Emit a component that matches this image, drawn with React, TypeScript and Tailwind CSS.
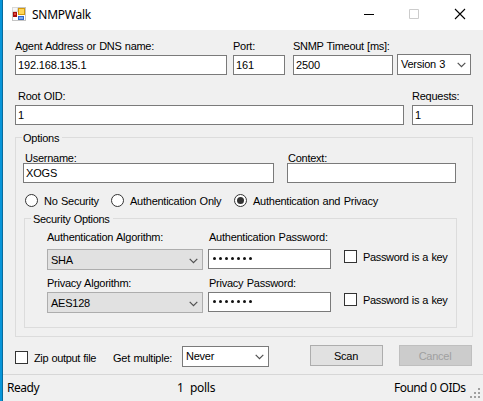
import { ReactNode } from 'react';
import clsx from 'clsx';

function Text({ children, className }: { children: ReactNode; className?: string }) {
  return <span className={clsx('block h-[14px] whitespace-pre leading-[14px]', className)}>{children}</span>;
}

function Field({ value, className }: { value?: string; className: string }) {
  return (
    <div className={clsx('flex h-5 shrink-0 border border-[#7a7a7a] bg-white pl-[2px] pt-[2px]', className)}>
      <Text className="tracking-[-0.15px]">{value}</Text>
    </div>
  );
}

function Password() {
  return (
    <div className="flex h-5 w-[123px] items-center gap-[3px] border border-[#7a7a7a] bg-white pb-px pl-[3.5px]">
      {[0, 1, 2, 3, 4, 5, 6].map((i) => (
        <span key={i} className="size-[3px] rounded-full bg-[#111]" />
      ))}
    </div>
  );
}

function Combo({ value, className }: { value: string; className: string }) {
  return (
    <div className={clsx('flex h-[21px] shrink-0 items-start justify-between border pl-[3px] pr-1', className)}>
      <Text className="pt-[2px]">{value}</Text>
      <svg width="9" height="6" viewBox="0 0 9 6" className="mt-[7px]">
        <path d="M0.7 0.8 4.5 4.6 8.3 0.8" fill="none" stroke="#505050" strokeWidth="1.2" />
      </svg>
    </div>
  );
}

function Radio({ label, checked, className }: { label: string; checked?: boolean; className: string }) {
  return (
    <div className={clsx('flex shrink-0 items-start gap-[6px]', className)}>
      <span className="flex size-[13px] shrink-0 items-center justify-center rounded-full border border-[#333] bg-white">
        {checked && <span className="size-[7px] rounded-full bg-[#333]" />}
      </span>
      <Text>{label}</Text>
    </div>
  );
}

function Check({ label, className }: { label: string; className?: string }) {
  return (
    <div className={clsx('flex h-[14px] shrink-0 gap-[6px] tracking-[-0.35px]', className)}>
      <span className="size-[13px] shrink-0 border border-[#333] bg-white" />
      <Text>{label}</Text>
    </div>
  );
}

const select = 'w-[156px] border-[#adadad] bg-[#e1e1e1] pt-px';

export default function App() {
  return (
    <div className="flex h-[401px] w-[483px] overflow-hidden bg-[#f0f0f0] font-['Liberation_Sans',Arial,sans-serif] text-[11px] tracking-[-0.25px] [word-spacing:0.6px] text-black">
      <div className="w-[3px] shrink-0 border-r border-[#086b9c] bg-[#0795d9]" />
      <div className="flex w-[480px] flex-col">
        <header className="flex h-[30px] shrink-0 items-center bg-white pb-[2px] pl-[9px] pr-[17px]">
          <svg width="14" height="14" viewBox="0 0 14 14" shapeRendering="crispEdges">
            <path d="M0.5 0.5h13v13h-13z" fill="#fff" stroke="#c5c5c5" />
            <path d="M0 0h6v5H0z" fill="#d9d9d9" />
            <path d="M1 1h4v3H1z" fill="#f6f6f6" />
            <path d="M1 5h4v5H1z" fill="#a80f0d" />
            <path d="M2 6h2v2H2z" fill="#df4942" />
            <path d="M6 1h7v7H6z" fill="#d39a10" />
            <path d="M7 2h5v5H7z" fill="#ffd75a" />
            <path d="M6 9h6v4H6z" fill="#2f68cc" />
            <path d="M7 10h4v2H7z" fill="#7caaf1" />
          </svg>
          <span className="ml-[6px] mt-[2px] font-['Noto_Sans','Open_Sans',sans-serif] text-[12px] leading-4 tracking-[-0.25px]">SNMPWalk</span>
          <div className="ml-auto flex items-center">
            <svg width="102" height="12" viewBox="0 0 102 12">
              <path d="M0 6.5h10" stroke="#000" />
              <path d="M45.5 1.5h9v9h-9z" fill="none" stroke="#ccc" />
              <path d="m91 1 10 10m0-10L91 11" stroke="#000" strokeWidth="1.1" />
            </svg>
          </div>
        </header>

        <main className="h-[344px] shrink-0 pl-3 pt-[9px]">
          <div className="flex">
            <div className="mr-[6px] w-[212px]"><Text className="mb-[2px] tracking-[-0.3px]">Agent Address or DNS name:</Text><Field value="192.168.135.1" className="w-[212px]" /></div>
            <div className="mr-2 w-[52px]"><Text className="mb-[2px]">Port:</Text><Field value="161" className="w-[52px]" /></div>
            <div className="mr-1 w-[100px]"><Text className="mb-[2px] tracking-[-0.3px]">SNMP Timeout [ms]:</Text><Field value="2500" className="w-[100px]" /></div>
            <Combo value="Version 3" className="mt-[15px] w-[74px] border-[#7a7a7a] bg-white" />
          </div>
          <div className="mt-[14px] flex gap-2">
            <div><Text className="mb-[2px] pl-[3px]">Root OID:</Text><Field value="1" className="w-[389px]" /></div>
            <div><Text className="mb-[2px]">Requests:</Text><Field value="1" className="w-[61px]" /></div>
          </div>

          <section className="mt-3 h-[200px] w-[458px] border border-[#dcdcdc] pl-[7px]">
            <Text className="-ml-px -mt-[7px] w-[40px] bg-[#f0f0f0] pl-px">Options</Text>
            <div className="mt-[6px] flex gap-[13px]">
              <div><Text className="-mb-[2px] pl-[2px]">Username:</Text><Field value="XOGS" className="w-[251px]" /></div>
              <div><Text className="-mb-[2px] pl-px">Context:</Text><Field className="w-[169px]" /></div>
            </div>
            <div className="mt-[11px] flex h-[14px] pl-[2px]">
              <Radio label="No Security" className="w-[86px]" />
              <Radio label="Authentication Only" className="w-[123px]" />
              <Radio label="Authentication and Privacy" checked className="w-[160px]" />
            </div>

            <section className="ml-px mt-[10px] h-[110px] w-[433px] border border-[#dcdcdc]">
              <Text className="-mt-[7px] ml-[6px] w-[82px] bg-[#f0f0f0] pl-[2px] tracking-[-0.3px]">Security Options</Text>
              <div className="flex pl-[22px] pt-[4px]">
                <div className="w-[161px]"><Text className="mb-[5px]">Authentication Algorithm:</Text><Combo value="SHA" className={select} /></div>
                <div className="w-[136px]"><Text className="mb-[5px] pl-px">Authentication Password:</Text><Password /></div>
                <Check label="Password is a key" className="mt-5" />
              </div>
              <div className="flex pl-[22px] pt-[6px]">
                <div className="w-[161px]"><Text className="mb-[2px]">Privacy Algorithm:</Text><Combo value="AES128" className={select} /></div>
                <div className="w-[136px]"><Text className="mb-[2px] pl-px">Privacy Password:</Text><Password /></div>
                <Check label="Password is a key" className="mt-[17px]" />
              </div>
            </section>
          </section>

          <div className="mt-2 flex h-[22px]">
            <Check label="Zip output file" className="mt-[6px] w-[98px]" />
            <Text className="mt-[6px] w-[69px]">Get multiple:</Text>
            <Combo value="Never" className="mt-px w-[87px] border-[#7a7a7a] bg-white" />
            <button className="ml-[41px] flex h-[21px] w-[73px] justify-center border border-[#adadad] bg-[#e1e1e1] pr-px pt-[3px]"><Text>Scan</Text></button>
            <button className="ml-4 flex h-[21px] w-[73px] justify-center border border-[#bfbfbf] bg-[#ccc] pr-px pt-[3px] text-[#a0a0a0]"><Text>Cancel</Text></button>
          </div>
        </main>

        <footer className="flex h-[27px] border-t border-[#d7d7d7] pl-1 pt-[6px] font-['Noto_Sans','Open_Sans',sans-serif] text-[12px] tracking-[-0.45px]">
          <Text className="w-[170px]">Ready</Text>
          <Text className="w-[13px]">1</Text>
          <Text className="w-[204px] tracking-[-0.3px]">polls</Text>
          <Text className="w-[76px] tracking-[-0.55px]">Found 0 OIDs</Text>
          <svg width="11" height="11" viewBox="0 0 11 11" className="mt-[7px]" fill="#a0a0a0">
            <path d="M8 0h2v2H8zM4 4h2v2H4zM8 4h2v2H8zM0 8h2v2H0zM4 8h2v2H4zM8 8h2v2H8z" />
          </svg>
        </footer>
      </div>
    </div>
  );
}
